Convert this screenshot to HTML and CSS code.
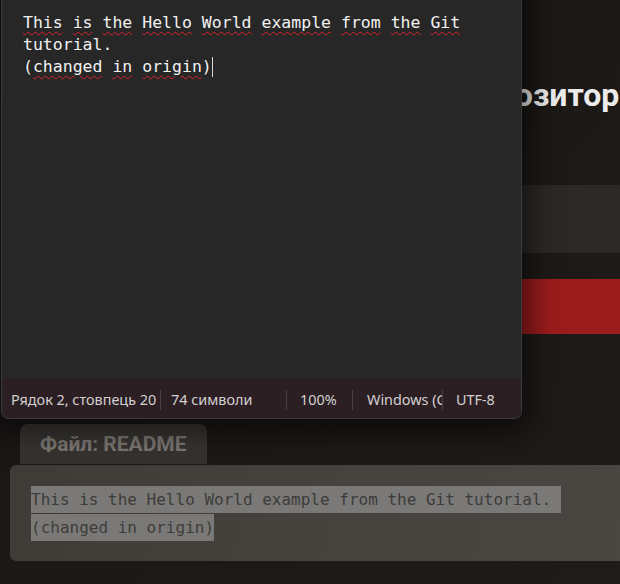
FILE: index.html
```html
<!DOCTYPE html>
<html lang="uk">
<head>
<meta charset="utf-8">
<title>Notepad over Git tutorial</title>
<link rel="stylesheet" href="styles.css">
</head>
<body>
<div class="page">
  <h1 class="title">Репозиторій</h1>
  <div class="band band-gray"></div>
  <div class="band band-red"></div>
  <div class="tab">Файл: README</div>
  <div class="filebox">
    <div class="sel">This is the Hello World example from the Git tutorial. </div>
    <div class="sel">(changed in origin)</div>
  </div>
</div>

<div class="notepad">
  <div class="editor">
    <div class="line"><span class="sp">This</span> <span class="sp">is</span> <span class="sp">the</span> <span class="sp">Hello</span> <span class="sp">World</span> <span class="sp">example</span> <span class="sp">from</span> <span class="sp">the</span> <span class="sp">Git</span></div>
    <div class="line">tutorial.</div>
    <div class="line">(<span class="sp">changed</span> <span class="sp">in</span> <span class="sp">origin</span>)<span class="caret"></span></div>
  </div>
  <div class="status">
    <div class="cell c1">Рядок 2, стовпець 20</div>
    <div class="sep"></div>
    <div class="cell c2">74 символи</div>
    <div class="sep"></div>
    <div class="cell c3">100%</div>
    <div class="sep"></div>
    <div class="cell c4">Windows (CRLF)</div>
    <div class="sep"></div>
    <div class="cell c5">UTF-8</div>
  </div>
</div>
</body>
</html>
```

FILE: styles.css
```css
html, body {
  margin: 0;
  padding: 0;
}
body {
  width: 620px;
  height: 584px;
  overflow: hidden;
  position: relative;
  background: linear-gradient(135deg, #141211 0%, #1b1816 45%, #1e1b18 100%);
  font-family: Roboto, "Noto Sans", sans-serif;
}

.page {
  padding-left: 10px;
  width: 620px;
  box-sizing: border-box;
  overflow: hidden;
}
.title {
  margin: 0;
  padding: 77px 0 0 449px;
  font: 700 32px/37px Roboto, "Noto Sans", sans-serif;
  color: #ececec;
  white-space: nowrap;
  overflow: hidden;
}
.band-gray {
  margin-top: 71px;
  height: 68px;
  background: #2b2927;
}
.band-red {
  margin-top: 26px;
  height: 55px;
  background: #9b1c1c;
}
.tab {
  margin: 90px 0 0 10px;
  width: 187px;
  height: 40px;
  box-sizing: border-box;
  padding-left: 20px;
  border-radius: 8px 8px 0 0;
  background: linear-gradient(180deg, #3b3835, #34312e);
  color: #7d7975;
  font: 700 21px/40px Roboto, "Noto Sans", sans-serif;
  white-space: nowrap;
}
.filebox {
  margin-top: 1px;
  margin-right: -20px;
  height: 96px;
  box-sizing: border-box;
  padding: 21px 0 0 21px;
  border-radius: 6px;
  background: linear-gradient(100deg, #3f3c38 0%, #46433e 50%, #4a4742 100%);
}
.sel {
  width: fit-content;
  white-space: pre;
  font: 16px/27px "DejaVu Sans Mono", monospace;
  color: #3d3c3a;
  background: #7a7977;
  margin-bottom: 1px;
}

.notepad {
  position: absolute;
  left: 1px;
  top: -40px;
  width: 521px;
  height: 459px;
  box-sizing: border-box;
  display: flex;
  flex-direction: column;
  border: 1px solid #3c3b3b;
  border-top: none;
  border-radius: 0 0 8px 8px;
  overflow: hidden;
  background: #272727;
  box-shadow: 0 6px 30px 8px rgba(0, 0, 0, 0.55);
}
.editor {
  flex: 1;
  padding: 52px 0 0 21px;
  font: 16.5px/22px "DejaVu Sans Mono", monospace;
  color: #f2f2f2;
}
.line {
  white-space: pre;
}
.sp {
  text-decoration: underline wavy #e0202a;
  text-decoration-thickness: 1px;
  text-underline-offset: 3px;
}
.caret {
  display: inline-block;
  width: 1px;
  height: 20px;
  vertical-align: -5px;
  background: #d8d8d8;
}
.status {
  height: 40px;
  box-sizing: border-box;
  padding-top: 3px;
  flex: none;
  display: flex;
  align-items: center;
  background: #2b1f23;
  font: 14.4px/20px "Noto Sans", sans-serif;
  color: #d4d0d1;
}
.cell {
  box-sizing: border-box;
  white-space: nowrap;
  overflow: hidden;
}
.c1 { width: 158px; padding-left: 9px; }
.c2 { width: 125px; padding-left: 10px; }
.c3 { width: 65px; padding-left: 13px; }
.c4 { width: 89px; padding-left: 14px; }
.c5 { flex: 1; padding-left: 13px; }
.sep {
  width: 1px;
  height: 20px;
  background: #4a3f43;
  flex: none;
}
```
